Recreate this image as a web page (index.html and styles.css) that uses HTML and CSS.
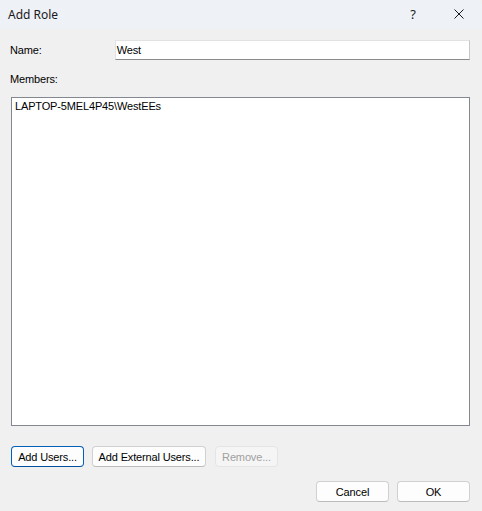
FILE: index.html
```html
<!DOCTYPE html>
<html>
<head>
<meta charset="utf-8">
<link rel="stylesheet" href="styles.css">
</head>
<body>
<div class="window">
  <div class="titlebar">
    <span class="title">Add Role</span>
    <div class="controls">
      <span class="ctl help">?</span>
      <span class="ctl close"><svg width="10" height="10" viewBox="0 0 10 10"><path d="M0.5 0.5 L9.5 9.5 M9.5 0.5 L0.5 9.5" stroke="#1a1a1a" stroke-width="1" fill="none"/></svg></span>
    </div>
  </div>
  <div class="content">
    <div class="name-row">
      <span class="label name-label">Name:</span>
      <div class="textbox">West</div>
    </div>
    <div class="label members-label">Members:</div>
    <div class="listbox">
      <div class="item">LAPTOP-5MEL4P45\WestEEs</div>
    </div>
    <div class="btn-row">
      <button class="btn default w-users">Add Users...</button>
      <button class="btn w-ext">Add External Users...</button>
      <button class="btn disabled w-remove">Remove...</button>
    </div>
    <div class="footer">
      <button class="btn w-dlg">Cancel</button>
      <button class="btn w-dlg">OK</button>
    </div>
  </div>
</div>
</body>
</html>
```

FILE: styles.css
```css
html, body {
  margin: 0;
  padding: 0;
  background: #f0f0f0;
}
.window {
  width: 482px;
  height: 511px;
  display: flex;
  flex-direction: column;
  background: #f0f0f0;
  font-family: "Liberation Sans", Arial, sans-serif;
  font-size: 11px;
  letter-spacing: -0.15px;
  color: #000;
}
.titlebar {
  height: 29px;
  display: flex;
  align-items: center;
  background: #eef2f7;
  border-top-right-radius: 7px;
}
.title {
  font-family: "Noto Sans", "Open Sans", sans-serif;
  font-size: 12px;
  letter-spacing: 0;
  color: #1a1a1a;
  padding-left: 8px;
}
.controls {
  margin-left: auto;
  display: flex;
  height: 29px;
}
.ctl {
  width: 46px;
  display: flex;
  align-items: center;
  justify-content: center;
}
.help {
  font-family: "Noto Sans", sans-serif;
  font-size: 13px;
  letter-spacing: 0;
  color: #1a1a1a;
  padding-bottom: 1px;
}
.close svg {
  display: block;
  margin-bottom: 1px;
}
.content {
  display: flex;
  flex-direction: column;
  padding: 11px 12px 0 10px;
}
.label {
  line-height: 13px;
}
.name-row {
  display: flex;
  align-items: center;
  height: 20px;
}
.name-label {
  width: 105px;
}
.textbox {
  width: 353px;
  height: 18px;
  line-height: 18px;
  background: #fff;
  border: 1px solid;
  border-color: #e2e2e2 #c8c8c8 #8a8a8a #e2e2e2;
  padding-left: 1px;
  box-sizing: content-box;
}
.members-label {
  margin-top: 13px;
}
.listbox {
  margin-top: 11px;
  margin-left: 1px;
  height: 329px;
  background: #fff;
  border: 1px solid #828790;
  padding: 2px 3px;
  box-sizing: border-box;
}
.item {
  line-height: 13px;
}
.btn-row {
  display: flex;
  gap: 8px;
  margin-top: 20px;
  margin-left: 1px;
}
.btn {
  height: 21px;
  padding: 0;
  font-family: "Liberation Sans", Arial, sans-serif;
  font-size: 11px;
  letter-spacing: -0.15px;
  color: #000;
  background: #fdfdfd;
  border: 1px solid #d0d0d0;
  border-bottom-color: #bcbcbc;
  border-radius: 4px;
  box-sizing: border-box;
  text-align: center;
}
.btn.default {
  border: 1px solid #005fb8;
  border-bottom-color: #0050a0;
}
.btn.disabled {
  background: #f5f5f5;
  border-color: #e5e5e5;
  color: #a0a0a0;
}
.w-users { width: 73px; }
.w-ext { width: 114px; }
.w-remove { width: 63px; margin-left: 1px; }
.footer {
  display: flex;
  justify-content: flex-end;
  gap: 8px;
  margin-top: 14px;
}
.w-dlg { width: 73px; }
```
